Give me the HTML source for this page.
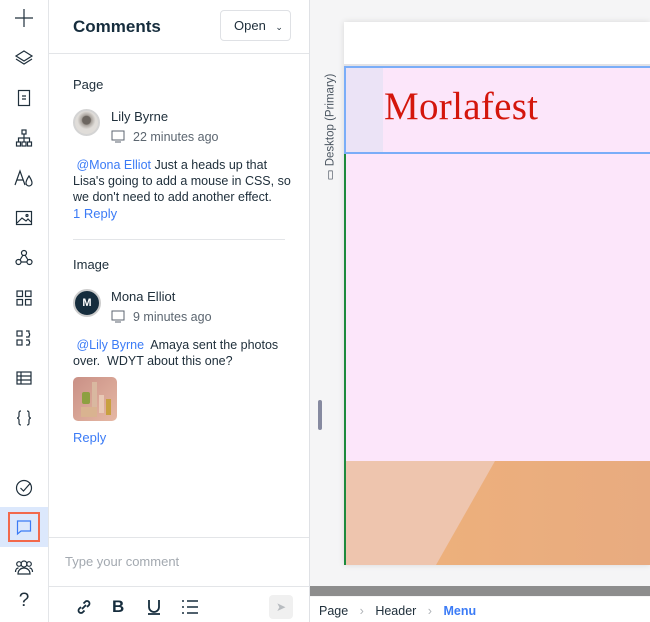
<!DOCTYPE html>
<html><head><style>
*{margin:0;padding:0;box-sizing:border-box}
body{width:650px;height:622px;overflow:hidden;background:#f5f5f6;font-family:"Liberation Sans",sans-serif;position:relative;color:#20303c}
.abs{position:absolute}
#side{left:0;top:0;width:49px;height:622px;background:#fff;border-right:1px solid #e3e5e8}
#side svg{position:absolute;left:14px;width:20px;height:20px;fill:none;stroke:#20303c;stroke-width:1.2}
#panel{left:49px;top:0;width:261px;height:622px;background:#fff;border-right:1px solid #dfe1e5}
.t{position:absolute;font-size:12.5px;white-space:nowrap}
.blue{color:#3b7bf6}
.gray{color:#5c6670}
</style></head><body>
<div id="side" class="abs">
<svg style="top:8px" viewBox="0 0 20 20"><path d="M10 1v18M1 10h18"/></svg>
<svg style="top:48px" viewBox="0 0 20 20"><path d="M10 3l8 5-8 5-8-5z M2 11l8 5 8-5"/></svg>
<svg style="top:88px" viewBox="0 0 20 20"><rect x="4.5" y="2.5" width="11" height="15"/><path d="M8 8h4M8 11h4"/></svg>
<svg style="top:128px" viewBox="0 0 20 20"><rect x="8" y="2" width="4" height="4"/><rect x="2.5" y="14" width="4" height="4"/><rect x="13.5" y="14" width="4" height="4"/><path d="M10 6v4M4.5 14v-4h11v4M10 10v4"/><rect x="8" y="14" width="4" height="4"/></svg>
<svg style="top:168px" viewBox="0 0 20 20"><path d="M1 17L6 3l5 14M3 12h6M15 8c-2 3-3 5-3 7a3 3 0 006 0c0-2-1-4-3-7z"/></svg>
<svg style="top:208px" viewBox="0 0 20 20"><rect x="2.5" y="3.5" width="15" height="13"/><path d="M3 15l5-5 4 3 2-2 3 3"/><circle cx="13" cy="7.5" r="1"/></svg>
<svg style="top:248px" viewBox="0 0 20 20"><circle cx="10" cy="5" r="2.5"/><circle cx="4.5" cy="14" r="2.5"/><circle cx="15.5" cy="14" r="2.5"/><path d="M9 7l-3 5M11 7l3 5M7 14h6"/></svg>
<svg style="top:288px" viewBox="0 0 20 20"><rect x="3" y="3" width="5.5" height="5.5"/><rect x="11.5" y="3" width="5.5" height="5.5"/><rect x="3" y="11.5" width="5.5" height="5.5"/><rect x="11.5" y="11.5" width="5.5" height="5.5"/></svg>
<svg style="top:328px" viewBox="0 0 20 20"><rect x="3" y="3" width="5" height="5"/><rect x="3" y="12" width="5" height="5"/><path d="M12 3h3v2a2 2 0 010 3v1h-3M12 12h3v1a2 2 0 010 3v1h-3"/></svg>
<svg style="top:368px" viewBox="0 0 20 20"><rect x="3" y="4" width="14" height="12"/><path d="M3 8h14M3 12h14M7 4v12"/></svg>
<svg style="top:408px" viewBox="0 0 20 20"><path d="M7 3c-2 0-2 1-2 3v2c0 1-1 2-2 2 1 0 2 1 2 2v2c0 2 0 3 2 3M13 3c2 0 2 1 2 3v2c0 1 1 2 2 2-1 0-2 1-2 2v2c0 2 0 3-2 3"/></svg>
<svg style="top:478px" viewBox="0 0 20 20"><circle cx="10" cy="10" r="7.5"/><path d="M6.5 10l3 3 7-8"/></svg>
<div class="abs" style="left:0;top:507px;width:48px;height:40px;background:#dce8fc"></div>
<div class="abs" style="left:8px;top:512px;width:32px;height:30px;border:2px solid #f2694c"></div>
<svg style="top:517px;stroke:#3b7bf6" viewBox="0 0 20 20"><path d="M3.5 4h13v10H7l-3.5 3z"/></svg>
<svg style="top:557px" viewBox="0 0 20 20"><circle cx="10" cy="7" r="3"/><path d="M4 17c0-4 3-6 6-6s6 2 6 6z"/><circle cx="5" cy="7" r="2.3"/><circle cx="15" cy="7" r="2.3"/><path d="M1.5 15c0-2 1-4 3-4M18.5 15c0-2-1-4-3-4"/></svg>
<div class="abs" style="left:0;top:590px;width:48px;text-align:center;font-size:19px;color:#20303c">?</div>
</div>

<div id="panel" class="abs">
<div class="abs" style="left:24px;top:17px;font-size:17px;font-weight:bold;color:#162d3d">Comments</div>
<div class="abs" style="left:171px;top:10px;width:71px;height:31px;border:1px solid #dfe1e5;border-radius:4px;font-size:13px;padding:7px 0 0 13px">Open <span style="font-size:9px;margin-left:6px">&#8964;</span></div>
<div class="abs" style="left:0;top:53px;width:260px;height:1px;background:#e3e5e8"></div>

<div class="t" style="left:24px;top:77px;font-size:13px">Page</div>
<div class="abs" style="left:24px;top:109px;width:27px;height:27px;border-radius:50%;border:2px solid #d4d4d4;background:radial-gradient(circle at 50% 40%,#6c6660 0 4px,#a9a39d 5px,#e0ddd9 9px)"></div>
<div class="t" style="left:62px;top:109px;font-size:13px">Lily Byrne</div>
<svg class="abs" style="left:62px;top:130px" width="14" height="13" viewBox="0 0 14 13"><rect x="1" y="1" width="12" height="9" fill="none" stroke="#5c6670"/><path d="M4 12h6" stroke="#5c6670"/></svg>
<div class="t gray" style="left:84px;top:130px">22 minutes ago</div>
<div class="t" style="left:24px;top:157px;line-height:16px"><span class="blue">&nbsp;@Mona Elliot</span> Just a heads up that<br>Lisa's going to add a mouse in CSS, so<br>we don't need to add another effect.</div>
<div class="t blue" style="left:24px;top:206px;font-size:13px">1 Reply</div>
<div class="abs" style="left:24px;top:239px;width:212px;height:1px;background:#e3e5e8"></div>

<div class="t" style="left:24px;top:257px;font-size:13px">Image</div>
<div class="abs" style="left:24px;top:289px;width:28px;height:28px;border-radius:50%;background:#162d3d;border:2px solid #ccc;color:#fff;font-size:11px;font-weight:bold;text-align:center;line-height:24px">M</div>
<div class="t" style="left:62px;top:289px;font-size:13px">Mona Elliot</div>
<svg class="abs" style="left:62px;top:310px" width="14" height="13" viewBox="0 0 14 13"><rect x="1" y="1" width="12" height="9" fill="none" stroke="#5c6670"/><path d="M4 12h6" stroke="#5c6670"/></svg>
<div class="t gray" style="left:84px;top:310px">9 minutes ago</div>
<div class="t" style="left:24px;top:337px;line-height:16px"><span class="blue">&nbsp;@Lily Byrne</span>&nbsp; Amaya sent the photos<br>over.&nbsp; WDYT about this one?</div>
<div class="abs" style="left:24px;top:377px;width:44px;height:44px;border-radius:5px;background:linear-gradient(135deg,#c99086,#e6b8a4)">
 <div class="abs" style="left:9px;top:15px;width:8px;height:12px;background:#8da041;border-radius:2px"></div>
 <div class="abs" style="left:19px;top:5px;width:5px;height:30px;background:#d9b8a0"></div>
 <div class="abs" style="left:26px;top:18px;width:5px;height:18px;background:#e9c9b6"></div>
 <div class="abs" style="left:33px;top:22px;width:5px;height:16px;background:#c8a040"></div>
 <div class="abs" style="left:8px;top:30px;width:16px;height:10px;background:#d9b390"></div>
</div>
<div class="t blue" style="left:24px;top:430px;font-size:13px">Reply</div>

<div class="abs" style="left:0;top:537px;width:260px;height:1px;background:#e3e5e8"></div>
<div class="t" style="left:16px;top:554px;color:#a3a9b0;font-size:13px">Type your comment</div>
<div class="abs" style="left:0;top:586px;width:260px;height:1px;background:#e3e5e8"></div>
<svg class="abs" style="left:26px;top:598px" width="18" height="18" viewBox="0 0 18 18" fill="none" stroke="#162d3d" stroke-width="1.8"><path d="M7 11l4-4M6 9l-2 2a2.5 2.5 0 003.5 3.5l2-2M12 9l2-2a2.5 2.5 0 00-3.5-3.5l-2 2"/></svg>
<div class="t" style="left:63px;top:597px;font-size:17px;font-weight:bold;color:#162d3d">B</div>
<svg class="abs" style="left:98px;top:598px" width="14" height="18" viewBox="0 0 14 18" fill="none" stroke="#162d3d" stroke-width="1.8"><path d="M2 2v7a5 5 0 0010 0V2M1 16h12"/></svg>
<svg class="abs" style="left:132px;top:599px" width="18" height="16" viewBox="0 0 18 16" fill="none" stroke="#162d3d" stroke-width="1.6"><path d="M1 2h2M6 2h11M1 8h2M6 8h11M1 14h2M6 14h11"/></svg>
<div class="abs" style="left:220px;top:595px;width:24px;height:24px;border-radius:4px;background:#f0f0f0;color:#b8bcc0;font-size:12px;text-align:center;line-height:24px">&#10148;</div>
</div>

<!-- canvas -->
<div class="abs" style="left:322px;top:65px;width:14px;height:125px">
 <div class="abs" style="left:-55px;top:55px;width:125px;transform:rotate(-90deg);font-size:11.5px;color:#4a5560;white-space:nowrap;text-align:center">&#9645; Desktop (Primary)</div>
</div>
<div class="abs" style="left:318px;top:400px;width:4px;height:30px;border-radius:2px;background:#868aa0"></div>
<div class="abs" style="left:344px;top:22px;width:306px;height:543px;background:#fff;box-shadow:0 0 6px rgba(0,0,0,.12)"></div>
<div class="abs" style="left:344px;top:64px;width:306px;height:2px;background:#e2e2e6"></div>
<div class="abs" style="left:344px;top:66px;width:306px;height:395px;background:#fce6fa"></div>
<div class="abs" style="left:344px;top:154px;width:2px;height:411px;background:#1c8a3c"></div>
<div class="abs" style="left:346px;top:67px;width:37px;height:86px;background:#ebe3f6"></div>
<div class="abs" style="left:344px;top:66px;width:306px;height:88px;border:2px solid #7aadf8;border-right:none"></div>
<div class="abs" style="left:384px;top:84px;font-family:'Liberation Serif',serif;font-size:39px;color:#d4160c;letter-spacing:0.3px">Morlafest</div>
<div class="abs" style="left:346px;top:461px;width:304px;height:104px;background:linear-gradient(90deg,#efb27a,#e8ab80)"></div>
<svg class="abs" style="left:346px;top:461px" width="150" height="104"><polygon points="0,0 149,0 90,104 0,104" fill="#eec5ae"/></svg>
<div class="abs" style="left:310px;top:586px;width:340px;height:10px;background:#8d8d8d"></div>
<div class="abs" style="left:310px;top:597px;width:340px;height:25px;background:#fff"></div>
<div class="t" style="left:319px;top:604px;font-size:12.5px">Page <span style="color:#b0b4b8;margin:0 8px">&#8250;</span> Header <span style="color:#b0b4b8;margin:0 8px">&#8250;</span> <b class="blue">Menu</b></div>
</body></html>
